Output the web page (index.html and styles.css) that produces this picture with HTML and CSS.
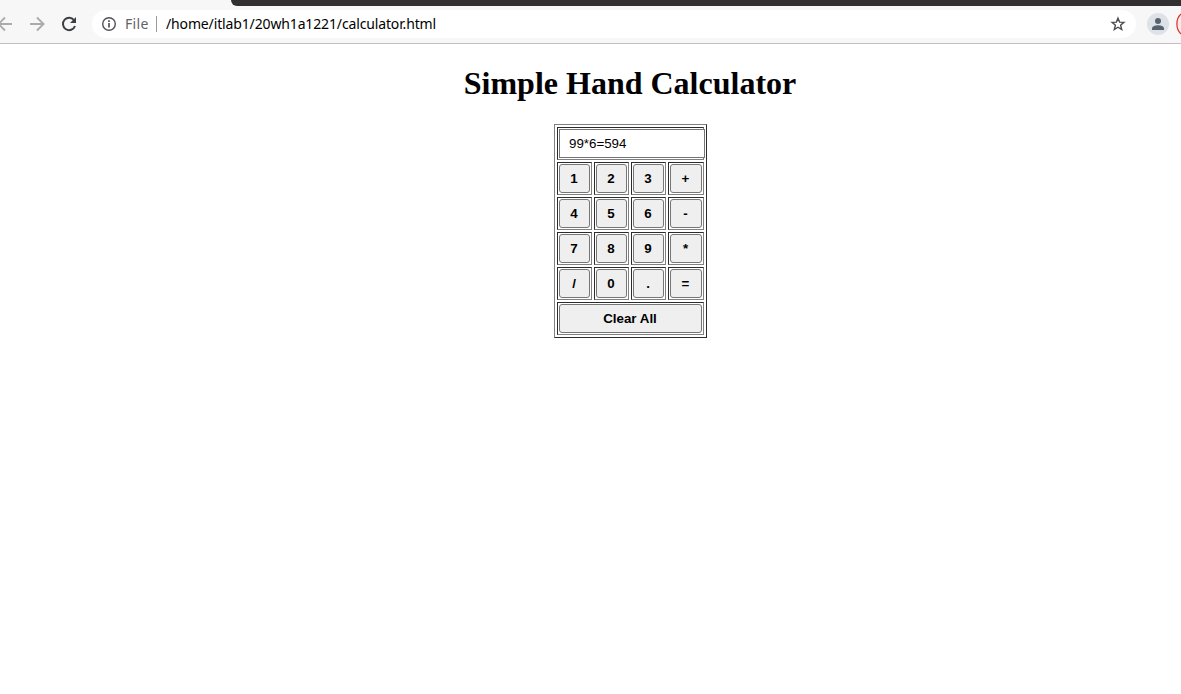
FILE: index.html
```html
<!DOCTYPE html>
<html lang="en">
<head>
<meta charset="utf-8">
<title>Simple Hand Calculator</title>
<link rel="stylesheet" href="styles.css">
</head>
<body>
<header class="browser">
  <div class="tabstrip"><div class="tabstrip-dark"></div></div>
  <div class="toolbar">
    <svg class="nav-icons" width="92" height="36" viewBox="0 6 92 36" fill="none">
      <path d="M12 24H-1M5 17.5L-1.500 24L5 30.500" stroke="#a9abad" stroke-width="1.900"/>
      <path d="M30 24H43M37 17.500L43.500 24L37 30.500" stroke="#a9abad" stroke-width="1.900"/>
      <path d="M74.300 20.500A6.200 6.200 0 1 0 75 26" stroke="#3c4043" stroke-width="2"/>
      <path d="M76 17V23H70Z" fill="#3c4043"/>
    </svg>
    <div class="omnibox">
      <svg class="info" width="16" height="16" viewBox="0 0 16 16" fill="none" stroke="#505256">
        <circle cx="8" cy="8" r="6.300" stroke-width="1.400"/>
        <path d="M8 7V11.500M8 4.300V6" stroke-width="1.700"/>
      </svg>
      <span class="scheme">File</span>
      <span class="divider"></span>
      <span class="url">/home/itlab1/20wh1a1221/calculator.html</span>
      <svg class="star" width="16" height="16" viewBox="0 0 16 16" fill="none" stroke="#484b4f" stroke-width="1.400">
        <path d="M8 2.200L9.600 6.100L13.900 6.400L10.600 9.200L11.700 13.500L8 11.200L4.300 13.500L5.400 9.200L2.100 6.400L6.400 6.100Z"/>
      </svg>
    </div>
    <svg class="profile" width="45" height="36" viewBox="1136 6 45 36">
      <circle cx="1158" cy="24" r="11" fill="#dee1e6"/>
      <circle cx="1158" cy="21" r="3" fill="#566270"/>
      <path d="M1152 30V28.500C1152 26 1156 25.300 1158 25.300S1164 26 1164 28.500V30Z" fill="#566270"/>
      <path d="M1181 14C1175.500 19 1175.500 29 1181 34Z" fill="#fce8e6"/>
      <path d="M1181 14C1175.500 19 1175.500 29 1181 34" fill="none" stroke="#d93025" stroke-width="1.200"/>
    </svg>
  </div>
</header>
<main class="page">
  <h1 class="title">Simple Hand Calculator</h1>
  <table class="calc">
    <colgroup><col class="col"><col class="col"><col class="col"><col class="col-last"></colgroup>
    <tr><td class="cell" colspan="4"><input class="display" type="text" value="99*6=594"></td></tr>
    <tr><td class="cell"><button class="key">1</button></td><td class="cell"><button class="key">2</button></td><td class="cell"><button class="key">3</button></td><td class="cell"><button class="key">+</button></td></tr>
    <tr><td class="cell"><button class="key">4</button></td><td class="cell"><button class="key">5</button></td><td class="cell"><button class="key">6</button></td><td class="cell"><button class="key">-</button></td></tr>
    <tr><td class="cell"><button class="key">7</button></td><td class="cell"><button class="key">8</button></td><td class="cell"><button class="key">9</button></td><td class="cell"><button class="key">*</button></td></tr>
    <tr><td class="cell"><button class="key">/</button></td><td class="cell"><button class="key">0</button></td><td class="cell"><button class="key">.</button></td><td class="cell"><button class="key">=</button></td></tr>
    <tr><td class="cell" colspan="4"><button class="key">Clear All</button></td></tr>
  </table>
</main>
</body>
</html>
```
FILE: styles.css
```css
body {
  margin: 0;
  background: #fff;
  overflow: hidden;
}

.browser {
  height: 43px;
  background: #f7f7f7;
  border-bottom: 1px solid #bfbfbf;
}

.tabstrip {
  height: 6px;
}

.tabstrip-dark {
  height: 6px;
  margin-left: 231px;
  background: #322f30;
  border-bottom-left-radius: 6px;
}

.toolbar {
  display: flex;
  height: 36px;
}

.nav-icons,
.profile {
  flex: none;
  overflow: hidden;
}

.omnibox {
  display: flex;
  flex: 1;
  align-items: center;
  box-sizing: border-box;
  height: 28px;
  margin-top: 4px;
  padding: 0 10px 0 9px;
  border-radius: 14px;
  background: #fff;
  font: 14px/20px "Noto Sans", sans-serif;
  white-space: nowrap;
}

.scheme {
  width: 24px;
  margin-left: 8px;
  color: #5f6368;
  letter-spacing: 0.3px;
}

.divider {
  width: 1px;
  height: 16px;
  margin: 0 9px 0 7px;
  background: #9a9c9f;
}

.url {
  color: #000;
  letter-spacing: -0.14px;
}

.star {
  margin-left: auto;
}

.page {
  padding: 21px 0 0 80px;
}

.title {
  margin: 0 0 22px;
  padding-right: 1px;
  text-align: center;
  font: bold 32px/37px "Liberation Serif", serif;
}

.calc {
  width: 153px;
  margin: 0 auto;
  table-layout: fixed;
  border: 1px solid;
  border-color: #808080 #2c2c2c #2c2c2c #808080;
  border-spacing: 2px;
}

.col {
  width: 35px;
}

.col-last {
  width: 36px;
}

.cell {
  height: 29px;
  padding: 1px;
  border: 1px solid;
  border-color: #2c2c2c #808080 #808080 #2c2c2c;
}

.display,
.key {
  display: block;
  box-sizing: border-box;
  width: 100%;
  height: 29px;
  margin: 0;
  border: 1px solid #767676;
  font: 13.333px "Liberation Sans", Arial, sans-serif;
  color: #000;
}

.display {
  width: 146px;
  padding: 0 9px;
  background: #fff;
}

.key {
  padding: 0 1px 0 0;
  border-radius: 3px;
  background: #efefef;
  font-weight: bold;
}
```
